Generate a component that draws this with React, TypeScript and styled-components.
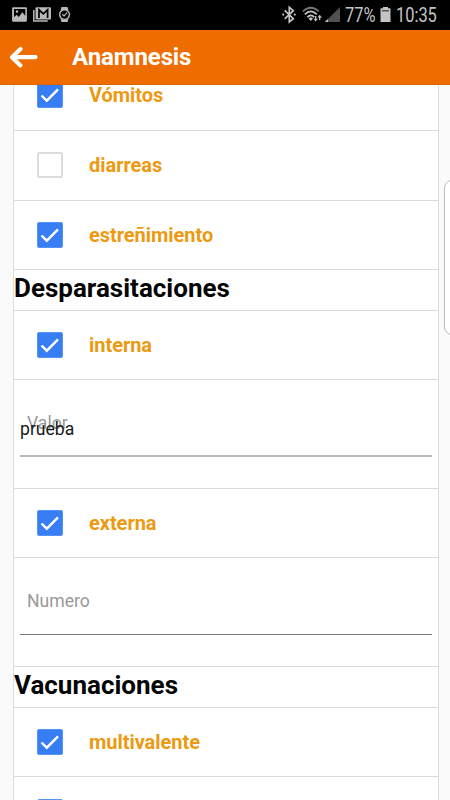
import React from "react";
import styled, { createGlobalStyle } from "styled-components";

const GlobalStyle = createGlobalStyle`
  *, *::before, *::after { box-sizing: border-box; }
  body { margin: 0; background: #fafafa; font-family: Roboto, "Noto Sans", sans-serif; }
`;

const Screen = styled.div`
  position: relative;
  display: flex;
  flex-direction: column;
  width: 450px;
  height: 800px;
  overflow: hidden;
  background: #fafafa;
`;

const StatusBar = styled.header`
  display: flex;
  flex: 0 0 30px;
  justify-content: space-between;
  height: 30px;
  background: #000;
`;

const StatusIcons = styled.svg`
  display: block;
  height: 30px;
`;

const StatusGroup = styled.div`
  display: flex;
  align-items: center;
  height: 30px;
  color: #c4c4c4;
`;

const StatusText = styled.span<{ $width: number }>`
  width: ${(p) => p.$width}px;
  font-family: Roboto, sans-serif;
  font-size: 20px;
  line-height: 30px;
  white-space: nowrap;
  transform: scaleX(0.82);
  transform-origin: left center;
`;

const Toolbar = styled.div`
  display: flex;
  flex: 0 0 55px;
  align-items: center;
  padding-left: 9px;
  background: #ef6c00;
  border-bottom: 1px solid #d96405;
`;

const BackIcon = styled.svg`
  width: 30px;
  height: 26px;
  margin-right: 33px;
`;

const Title = styled.h1`
  margin: 0;
  color: #fff;
  font-size: 24px;
  line-height: 54px;
  font-weight: 700;
  letter-spacing: -0.1px;
`;

const List = styled.main`
  display: flex;
  flex: 1;
  flex-direction: column;
  min-height: 0;
  overflow: hidden;
  width: 426px;
  margin-left: 13px;
  background: #fff;
  border-left: 1px solid #dedede;
  border-right: 1px solid #dedede;
`;

const CheckRow = styled.label<{ $height: number; $scrolled?: boolean }>`
  display: flex;
  flex: 0 0 ${(p) => p.$height}px;
  align-items: center;
  gap: 26px;
  margin-top: ${(p) => (p.$scrolled ? "-24px" : "0")};
  padding-left: 23px;
  padding-bottom: ${(p) => p.$height - 69}px;
  border-bottom: 1px solid #dadada;

  &:last-child { padding-top: 2px; }
`;

const Box = styled.span<{ $checked: boolean }>`
  display: flex;
  width: 26px;
  height: 26px;
  border-radius: 2px;
  border: ${(p) => (p.$checked ? "1px solid #5594f6" : "2px solid #dcdcdc")};
  background: ${(p) => (p.$checked ? "#377df4" : "#fff")};

  svg { display: block; width: 24px; height: 24px; }
`;

const Label = styled.span`
  color: #eb9a12;
  font-size: 20px;
  line-height: 26px;
  font-weight: 700;
  letter-spacing: -0.04px;
`;

const Section = styled.h2`
  flex: 0 0 41px;
  margin: 0;
  color: #050505;
  font-size: 26px;
  line-height: 37px;
  font-weight: 700;
  border-bottom: 1px solid #dadada;
`;

const FieldRow = styled.div<{ $height: number }>`
  display: flex;
  flex: 0 0 ${(p) => p.$height}px;
  flex-direction: column;
  padding: 0 6px;
  border-bottom: 1px solid #dadada;
`;

const Field = styled.div<{ $filled: boolean }>`
  position: relative;
  height: 77px;
  border-bottom: ${(p) => (p.$filled ? "2px solid #b9b9b9" : "1px solid #777")};
`;

const Hint = styled.span`
  position: absolute;
  left: 7px;
  top: 31px;
  color: #999;
  font-size: 17.6px;
  line-height: 24px;
`;

const Value = styled.span`
  position: absolute;
  left: 0;
  top: 37px;
  color: #181818;
  font-size: 17.6px;
  line-height: 24px;
`;

const EdgePanel = styled.div`
  position: absolute;
  left: 444px;
  top: 180px;
  width: 16px;
  height: 155px;
  border: 1px solid #bbb;
  border-radius: 8px;
  background: #fff;
`;

function Item({ text, checked = true, height = 70, scrolled }: {
  text?: string; checked?: boolean; height?: number; scrolled?: boolean;
}) {
  return (
    <CheckRow $height={height} $scrolled={scrolled}>
      <Box $checked={checked}>
        {checked && (
          <svg viewBox="0 0 24 24" fill="none" stroke="#fff" strokeWidth="2.4">
            <path d="M3.5 12.5 8.8 17.7 20 6.4" />
          </svg>
        )}
      </Box>
      {text && <Label>{text}</Label>}
    </CheckRow>
  );
}

function TextField({ hint, value, height }: { hint: string; value?: string; height: number }) {
  return (
    <FieldRow $height={height}>
      <Field $filled={!!value}>
        <Hint>{hint}</Hint>
        {value && <Value>{value}</Value>}
      </Field>
    </FieldRow>
  );
}

function NotificationIcons() {
  return (
    <StatusIcons width="80" viewBox="0 0 80 30" fill="#b9b9b9">
      <path fillRule="evenodd" d="M13.3 7.3h12.4q1.2 0 1.2 1.2v12q0 1.2-1.2 1.2H13.3q-1.2 0-1.2-1.2v-12q0-1.2 1.2-1.2ZM14 9v8.3l2.6-2.6 2.2 2.2 3.5-4.7 3 3.5V9Z" />
      <circle cx="17" cy="11.5" r="1.2" />
      <path d="M33.8 10v11h14" fill="none" stroke="#b9b9b9" strokeWidth="1.5" />
      <rect x="35.5" y="7.2" width="15.5" height="12.2" rx="1" />
      <path d="M39 18V9.8l4.3 4 4.3-4V18" fill="none" stroke="#000" strokeWidth="1.7" />
      <path d="M61.5 7h6l1 3.2h-8Zm-1 12.2h8l-1 2.8h-6Z" />
      <circle cx="64.5" cy="14.6" r="4.9" fill="#000" stroke="#b9b9b9" strokeWidth="1.4" />
      <path d="m62.3 14.3 1.8 1.7 3-3.4" fill="none" stroke="#b9b9b9" strokeWidth="1.2" />
    </StatusIcons>
  );
}

function SignalIcons() {
  return (
    <StatusIcons width="65" viewBox="280 0 65 30" fill="#c4c4c4">
      <g fill="none" stroke="#c4c4c4" strokeWidth="1.7">
        <path d="m284.7 10.3 8.6 8.3-4 3.3V7.3l4 3.4-8.6 8.1" />
        <path d="M302.8 11.5q8-7.5 16 0" stroke="#777" />
        <path d="M304.8 14.3q6-6 12 0M307.3 17.2q3.5-3.7 7 0" />
        <path d="M315.7 16v4M319.7 20v-3" strokeWidth="1.3" />
      </g>
      <circle cx="283.2" cy="14.6" r="1.1" />
      <circle cx="294.8" cy="14.6" r="1.1" />
      <path d="m308.5 18.5 2.3-1.2 2.3 1.2-2.3 2.5ZM313.5 18.7h4.4l-2.2 2.7ZM317.5 17.5h4.4l-2.2-2.7Z" />
      <path d="M340 7v15h-15Z" fill="#505050" />
      <path d="M328 19v3h-3Z" />
    </StatusIcons>
  );
}

function BatteryIcon() {
  return (
    <StatusIcons width="16" viewBox="0 0 16 30" fill="#c4c4c4">
      <path d="M3 7h5v1.3h2.5v13.6h-10V8.3H3Z" />
      <path d="M2 10h7v1.5H2Z" fill="#555" />
    </StatusIcons>
  );
}

export default function App() {
  return (
    <>
      <GlobalStyle />
      <Screen>
        <StatusBar>
          <NotificationIcons />
          <StatusGroup>
            <SignalIcons />
            <StatusText $width={35}>77%</StatusText>
            <BatteryIcon />
            <StatusText $width={54}>10:35</StatusText>
          </StatusGroup>
        </StatusBar>
        <Toolbar>
          <BackIcon viewBox="0 0 30 26" fill="none" stroke="#fff" strokeWidth="4.2" strokeLinecap="round" strokeLinejoin="round">
            <path d="M11.5 5 3 13.2l8.5 8.2M4 13.2h22.5" />
          </BackIcon>
          <Title>Anamnesis</Title>
        </Toolbar>
        <List>
          <Item text="Vómitos" scrolled />
          <Item text="diarreas" checked={false} />
          <Item text="estreñimiento" height={69} />
          <Section>Desparasitaciones</Section>
          <Item text="interna" height={69} />
          <TextField hint="Valor" value="prueba" height={109} />
          <Item text="externa" height={69} />
          <TextField hint="Numero" height={109} />
          <Section>Vacunaciones</Section>
          <Item text="multivalente" height={69} />
          <Item height={69} />
        </List>
        <EdgePanel />
      </Screen>
    </>
  );
}
